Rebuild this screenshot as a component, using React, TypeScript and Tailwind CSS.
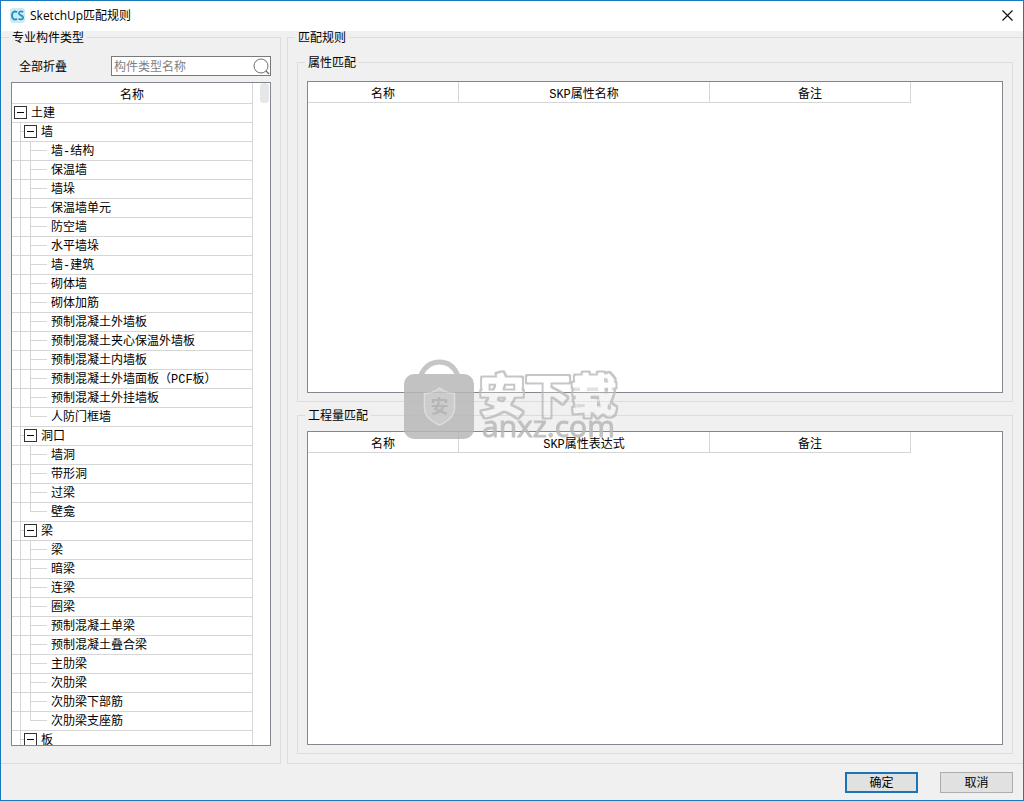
import type { ReactNode } from 'react';
import clsx from 'clsx';

const TREE = [
  {
    name: '墙',
    items: [
      '墙-结构',
      '保温墙',
      '墙垛',
      '保温墙单元',
      '防空墙',
      '水平墙垛',
      '墙-建筑',
      '砌体墙',
      '砌体加筋',
      '预制混凝土外墙板',
      '预制混凝土夹心保温外墙板',
      '预制混凝土内墙板',
      '预制混凝土外墙面板（PCF板）',
      '预制混凝土外挂墙板',
      '人防门框墙',
    ],
  },
  { name: '洞口', items: ['墙洞', '带形洞', '过梁', '壁龛'] },
  {
    name: '梁',
    items: [
      '梁',
      '暗梁',
      '连梁',
      '圈梁',
      '预制混凝土单梁',
      '预制混凝土叠合梁',
      '主肋梁',
      '次肋梁',
      '次肋梁下部筋',
      '次肋梁支座筋',
    ],
  },
  { name: '板', items: [] },
];

function Group({ title, className, children }: { title: string; className?: string; children: ReactNode }) {
  return (
    <fieldset className={clsx('flex min-h-0 min-w-0 flex-col border-[#dcdcdc]', className)}>
      <legend className="-ml-[2px] h-[13px] px-[3px] leading-4">{title}</legend>
      {children}
    </fieldset>
  );
}

function Toggle({ label }: { label: string }) {
  return (
    <button
      type="button"
      aria-label={`折叠${label}`}
      className="mt-[2px] flex h-[13px] w-[13px] shrink-0 items-center justify-center border border-[#333333] bg-white"
    >
      <span className="h-px w-[7px] bg-black" />
    </button>
  );
}

function Leaf({ name, last }: { name: string; last: boolean }) {
  return (
    <li className="flex h-[19px] border-b border-[#d6d6d6]">
      {/* guide line of the root */}
      <span className="w-[9px] shrink-0 border-r border-[#d6d6d6]" />
      <span className="w-[9px] shrink-0" />
      <span className={clsx('w-px shrink-0 bg-[#d6d6d6]', last ? 'h-[9px]' : 'h-[18px]')} />
      <span className="h-[9px] w-4 shrink-0 border-b border-[#d6d6d6]" />
      <span className="pl-1 leading-5 whitespace-nowrap">{name}</span>
    </li>
  );
}

function Branch({ name, items }: { name: string; items: string[] }) {
  return (
    <li>
      <div className="flex h-[19px] border-b border-[#d6d6d6]">
        <span className="w-[9px] shrink-0 border-r border-[#d6d6d6]" />
        <span className="h-[9px] w-[3px] shrink-0 border-b border-[#d6d6d6]" />
        <span className="flex items-start gap-1 leading-5">
          <Toggle label={name} />
          {name}
        </span>
      </div>
      <ul>
        {items.map((item, i) => (
          <Leaf key={item} name={item} last={i === items.length - 1} />
        ))}
      </ul>
    </li>
  );
}

function RuleTable({ columns }: { columns: string[] }) {
  return (
    <div className="min-h-0 flex-1 overflow-hidden border border-[#828790] bg-white">
      <table className="table-fixed border-separate border-spacing-0">
        <colgroup>
          <col className="w-[151px]" />
          <col className="w-[251px]" />
          <col className="w-[201px]" />
        </colgroup>
        <thead>
          <tr>
            {columns.map((c) => (
              <th key={c} className="h-[21px] border-r border-b border-[#d6d6d6] p-0 pt-[6px] leading-[14px] font-normal">
                {c}
              </th>
            ))}
          </tr>
        </thead>
      </table>
    </div>
  );
}

function Watermark() {
  return (
    <div className="pointer-events-none absolute top-[358px] left-[402px] flex gap-[3px] opacity-85">
      <svg width="72" height="82" viewBox="0 0 72 82" fill="none">
        <path d="M18 16C22 7 29 3 36.500 3s14.500 4 18 13" stroke="#bdbdbd" strokeWidth="5" />
        <rect x="1" y="15" width="70" height="65" rx="10" fill="#b8b8b8" />
        <path
          d="M36.500 29c5 4 10 5.500 15 5.500v15c0 7-6 12.500-15 16.500-9-4-15-9.500-15-16.500v-15c5 0 10-1.500 15-5.500z"
          fill="#c6c6c6"
          stroke="#d9d9d9"
          strokeWidth="1.500"
        />
        <text x="36.500" y="54" fontSize="18" fontWeight="700" textAnchor="middle" fill="#adadad" fontFamily="Noto Sans CJK SC">
          安
        </text>
      </svg>
      <div className="flex flex-col pt-3 whitespace-nowrap">
        <svg width="142" height="48" viewBox="0 0 142 48" className="overflow-visible">
          <defs>
            {/* keeps only the rim of the lettering */}
            <filter id="rim" x="-5%" y="-20%" width="110%" height="140%" colorInterpolationFilters="sRGB">
              <feMorphology in="SourceAlpha" operator="dilate" radius="1" result="outer" />
              <feMorphology in="SourceAlpha" operator="erode" radius="1" result="inner" />
              <feFlood floodColor="#bdbdbd" />
              <feComposite in2="outer" operator="in" />
              <feComposite in2="inner" operator="out" result="line" />
              <feFlood floodColor="#ffffff" floodOpacity="0.3" />
              <feComposite in2="inner" operator="in" result="body" />
              <feMerge>
                <feMergeNode in="body" />
                <feMergeNode in="line" />
              </feMerge>
            </filter>
          </defs>
          <text
            x="1"
            y="41"
            fontSize="46"
            fontWeight="700"
            fontFamily="Noto Sans CJK SC"
            strokeWidth="3"
            strokeLinejoin="round"
            stroke="#000000"
            filter="url(#rim)"
          >
            安下载
          </text>
        </svg>
        <span className="pl-1 font-['Open_Sans',sans-serif] text-[30px] leading-[14px] text-[#b8b8b8] [-webkit-text-stroke:1px_#b8b8b8]">
          anxz.com
        </span>
      </div>
    </div>
  );
}

export default function App() {
  return (
    <div className="relative flex h-screen flex-col overflow-hidden border border-[#1b78bd] bg-[#f0f0f0] font-['Liberation_Mono','Noto_Sans_CJK_SC',monospace] text-xs text-black">
      <header className="flex h-[30px] shrink-0 items-center bg-white pr-[10px] pl-[9px] font-['Open_Sans','Noto_Sans_CJK_SC',sans-serif]">
        <svg width="16" height="16" viewBox="0 0 16 16" fill="none" className="mr-1">
          <rect width="15" height="15" rx="3" fill="#cdeaf7" />
          <path d="M7 4.200C4.200 2.400 2 4.400 2 7.500s2.200 5.100 5 3.300" stroke="#2590bb" strokeWidth="1.900" />
          <path d="M13.200 3.900c-2-1-4.400-.6-4.400 1.400 0 2.300 4.400 1.900 4.400 4.300 0 2-2.600 2.300-4.700 1.200" stroke="#2590bb" strokeWidth="1.700" />
        </svg>
        <h1 className="flex-1">SketchUp匹配规则</h1>
        <button type="button" aria-label="关闭" className="pb-[2px]">
          <svg width="11" height="11" viewBox="0 0 11 11" stroke="#111111" strokeWidth="1.200">
            <path d="M.5.500l10 10M10.500.500l-10 10" />
          </svg>
        </button>
      </header>

      <main className="flex min-h-0 flex-1 gap-[6px]">
        <Group title="专业构件类型" className="w-[280px] shrink-0 border-y border-r pr-[9px] pb-[17px] pl-[10px]">
          <div className="flex items-center justify-between pt-3">
            <button type="button" className="pt-1 pl-2">
              全部折叠
            </button>
            <div className="flex h-5 w-40 items-center border border-[#7a7a7a] bg-white">
              <input
                type="text"
                aria-label="构件类型名称"
                placeholder="构件类型名称"
                className="min-w-0 flex-1 pt-[3px] pl-[2px] outline-none placeholder:text-[#7f7f7f]"
              />
              <svg width="17" height="17" viewBox="0 0 17 17" fill="none" stroke="#6e6e6e">
                <circle cx="8" cy="8" r="7" />
                <path d="M13 13l3 3" strokeWidth="1.400" />
              </svg>
            </div>
          </div>

          <div className="mt-[6px] flex min-h-0 flex-1 justify-between overflow-hidden border border-[#828790] bg-white">
            <div className="w-[241px] border-r border-[#d6d6d6]">
              <div className="h-[21px] border-b border-[#d6d6d6] text-center leading-[26px]">名称</div>
              <ul>
                <li>
                  <div className="flex h-[19px] items-start gap-1 border-b border-[#d6d6d6] pl-[2px] leading-5">
                    <Toggle label="土建" />
                    土建
                  </div>
                  <ul>
                    {TREE.map((b) => (
                      <Branch key={b.name} name={b.name} items={b.items} />
                    ))}
                  </ul>
                </li>
              </ul>
            </div>
            <div className="mr-px h-5 w-[9px] rounded-sm bg-[#e6e6e6]" />
          </div>
        </Group>

        <Group title="匹配规则" className="flex-1 border-y border-l pt-3 pr-[10px] pb-[9px] pl-[9px]">
          <div className="grid min-h-0 flex-1 grid-rows-2 gap-[7px]">
            <Group title="属性匹配" className="border px-[9px] pt-3 pb-2">
              <RuleTable columns={['名称', 'SKP属性名称', '备注']} />
            </Group>
            <Group title="工程量匹配" className="border px-[9px] pt-[9px] pb-2">
              <RuleTable columns={['名称', 'SKP属性表达式', '备注']} />
            </Group>
          </div>
        </Group>
      </main>

      <footer className="flex h-9 shrink-0 justify-end gap-[22px] pt-2 pr-[10px]">
        <button type="button" className="h-[21px] w-[73px] border-2 border-[#1b74b8] bg-[#e1e1e1] pt-[3px] leading-[14px]">
          确定
        </button>
        <button type="button" className="h-[21px] w-[73px] border border-[#adadad] bg-[#e1e1e1] pt-[3px] leading-[14px]">
          取消
        </button>
      </footer>

      <Watermark />
    </div>
  );
}
